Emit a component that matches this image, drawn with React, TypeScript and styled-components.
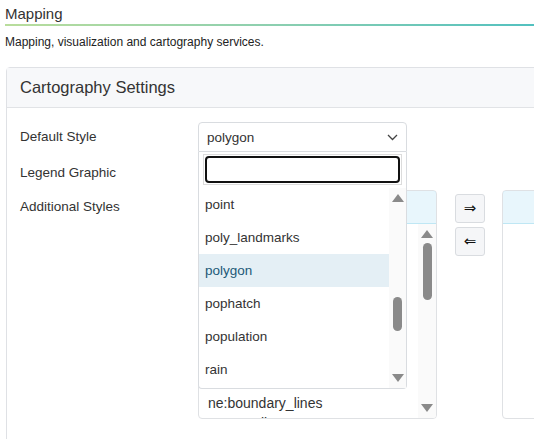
import React from 'react'
import styled, { createGlobalStyle } from 'styled-components'

const GlobalStyle = createGlobalStyle`
  html, body {
    margin: 0;
    padding: 0;
    overflow: hidden;
    background: #ffffff;
  }
  body {
    font-family: Tahoma, "Liberation Sans", Arial, sans-serif;
    color: #333333;
  }
`

const Page = styled.div`
  padding: 0 0 0 5px;
  width: 600px;
`

const Title = styled.h2`
  margin: 0;
  padding-top: 5px;
  font-size: 15px;
  line-height: 18px;
  font-weight: normal;
  color: #333;
  padding-bottom: 3px;

  &::after {
    content: '';
    display: block;
    height: 2px;
    margin-top: 1px;
    background: linear-gradient(90deg, #b9dd9c 0%, #8ccfb0 45%, #43bdc4 100%);
  }
`

const Description = styled.p`
  margin: 5px 0 0;
  font-size: 12px;
  line-height: 16px;
  color: #222;
`

const Card = styled.div`
  margin: 17px 0 0 1px;
  width: 580px;
  height: 420px;
  border: 1px solid #dfe1e5;
  border-radius: 4px 0 0 0;
  background: #fff;
`

const CardHeader = styled.div`
  height: 39px;
  display: flex;
  align-items: center;
  padding-left: 13px;
  background: #f7f8fa;
  border-bottom: 1px solid #e1e3e6;
  font-size: 16.5px;
  color: #333;
`

const CardBody = styled.div`
  padding: 14px 0 0 13px;
  display: grid;
  grid-template-columns: 178px 1fr;
  grid-auto-rows: auto;
  row-gap: 4px;
`

const Label = styled.div<{ $pad?: number }>`
  font-size: 13.5px;
  line-height: 16px;
  color: #333;
  padding-top: ${p => p.$pad ?? 0}px;
  align-self: ${p => (p.$pad ? 'start' : 'center')};
`

const Field = styled.div<{ $h?: number }>`
  position: relative;
  height: ${p => (p.$h ? `${p.$h}px` : 'auto')};
`

const Select = styled.div`
  width: 209px;
  height: 30px;
  box-sizing: border-box;
  border: 1px solid #d9dce0;
  border-radius: 4px 4px 0 0;
  display: flex;
  align-items: center;
  justify-content: space-between;
  padding: 0 8px 0 8px;
  font-size: 13.5px;
  color: #333;
  background: #fff;
`

const Dropdown = styled.div`
  position: absolute;
  top: 30px;
  left: 0;
  z-index: 5;
  width: 209px;
  height: 237px;
  box-sizing: border-box;
  border: 1px solid #d9dce0;
  border-top: none;
  border-radius: 0 0 4px 4px;
  background: #fff;
  display: flex;
  flex-direction: column;
`

const SearchBox = styled.div`
  margin: 2px 4px 0;
  height: 31px;
  box-sizing: border-box;
  border: 1px solid #dcdcdc;
  padding: 1px;
`

const SearchInput = styled.div`
  height: 100%;
  box-sizing: border-box;
  border: 2px solid #111;
  border-radius: 4px;
  background: #fff;
`

const OptionsArea = styled.div`
  margin-top: 3px;
  display: flex;
  height: 200px;
`

const Options = styled.ul`
  list-style: none;
  margin: 0;
  padding: 0;
  flex: 1;
`

const Option = styled.li<{ $active?: boolean }>`
  height: 33px;
  display: flex;
  align-items: center;
  padding-left: 6px;
  font-size: 13.5px;
  color: ${p => (p.$active ? '#215a78' : '#333')};
  background: ${p => (p.$active ? '#e4eff5' : 'transparent')};
`

const Track = styled.div<{ $w: number }>`
  width: ${p => p.$w}px;
  background: #fafafa;
  display: flex;
  flex-direction: column;
  align-items: center;
  justify-content: space-between;
  padding: 6px 0;
  box-sizing: border-box;
`

const ThumbLane = styled.div`
  flex: 1;
  width: 100%;
  display: flex;
  justify-content: center;
`

const Thumb = styled.div`
  width: 9px;
  border-radius: 5px;
  background: #8a8a8a;
`

const DualList = styled.div`
  display: flex;
  align-items: flex-start;
`

const ListBox = styled.div<{ $w: number }>`
  width: ${p => p.$w}px;
  height: 229px;
  box-sizing: border-box;
  border: 1px solid #dfe1e4;
  border-radius: 4px;
  display: flex;
  flex-direction: column;
  overflow: hidden;
`

const ListHeader = styled.div`
  height: 34px;
  box-sizing: border-box;
  background: #e8f6fc;
  border: 1px solid #bfe7f4;
  margin: -1px -1px 0;
  border-radius: 4px 4px 0 0;
`

const ListBody = styled.div`
  flex: 1;
  display: flex;
  overflow: hidden;
`

const Items = styled.ul`
  list-style: none;
  margin: 0;
  padding: 9px 0 0 9px;
  flex: 1;
  overflow: hidden;
`

const Item = styled.li`
  height: 20px;
  line-height: 20px;
  font-size: 14px;
  color: #333;
  white-space: nowrap;
`

const Buttons = styled.div`
  display: flex;
  flex-direction: column;
  gap: 4px;
  margin: 4px 17px 0 18px;
`

const MoveButton = styled.button`
  width: 30px;
  height: 29px;
  box-sizing: border-box;
  border: 1px solid #d9dce0;
  border-radius: 3px;
  background: #f5f6f8;
  font-size: 15px;
  line-height: 1;
  color: #111;
  padding: 0;
  font-family: "DejaVu Sans", sans-serif;
`

const Arrow = ({ up }: { up?: boolean }) => (
  <svg width="12" height="8" viewBox="0 0 12 8">
    <polygon points={up ? '6,0 12,8 0,8' : '0,0 12,0 6,8'} fill="#8a8a8a" />
  </svg>
)

const ScrollBar = ({ w, top, size }: { w: number; top: number; size: number }) => (
  <Track $w={w}>
    <Arrow up />
    <ThumbLane>
      <Thumb style={{ marginTop: top, height: size }} />
    </ThumbLane>
    <Arrow />
  </Track>
)

const Chevron = () => (
  <svg width="11" height="7" viewBox="0 0 11 7">
    <polyline points="1,1 5.5,5.5 10,1" fill="none" stroke="#444" strokeWidth="1.3" />
  </svg>
)

const options = ['point', 'poly_landmarks', 'polygon', 'pophatch', 'population', 'rain']
const layers = [
  'ne:airports',
  'ne:admin_0',
  'ne:admin_1',
  'ne:bathymetry',
  'ne:borders',
  'ne:cities',
  'ne:coast',
  'ne:countries',
  'ne:boundary_lines',
  'ne:coastline',
  'ne:populated_places',
]

export default function App() {
  return (
    <Page>
      <GlobalStyle />
      <Title>Mapping</Title>
      <Description>Mapping, visualization and cartography services.</Description>
      <Card>
        <CardHeader>Cartography Settings</CardHeader>
        <CardBody>
          <Label>Default Style</Label>
          <Field>
            <Select>
              <span>polygon</span>
              <Chevron />
            </Select>
            <Dropdown>
              <SearchBox>
                <SearchInput />
              </SearchBox>
              <OptionsArea>
                <Options>
                  {options.map(o => (
                    <Option key={o} $active={o === 'polygon'}>
                      {o}
                    </Option>
                  ))}
                </Options>
                <ScrollBar w={17} top={95} size={34} />
              </OptionsArea>
            </Dropdown>
          </Field>

          <Label $pad={9}>Legend Graphic</Label>
          <Field $h={30} />

          <Label $pad={9}>Additional Styles</Label>
          <Field>
            <DualList>
              <ListBox $w={239}>
                <ListHeader />
                <ListBody>
                  <Items>
                    {layers.map(l => (
                      <Item key={l}>{l}</Item>
                    ))}
                  </Items>
                  <ScrollBar w={18} top={5} size={57} />
                </ListBody>
              </ListBox>
              <Buttons>
                <MoveButton>⇒</MoveButton>
                <MoveButton>⇐</MoveButton>
              </Buttons>
              <ListBox $w={200}>
                <ListHeader />
              </ListBox>
            </DualList>
          </Field>
        </CardBody>
      </Card>
    </Page>
  )
}
